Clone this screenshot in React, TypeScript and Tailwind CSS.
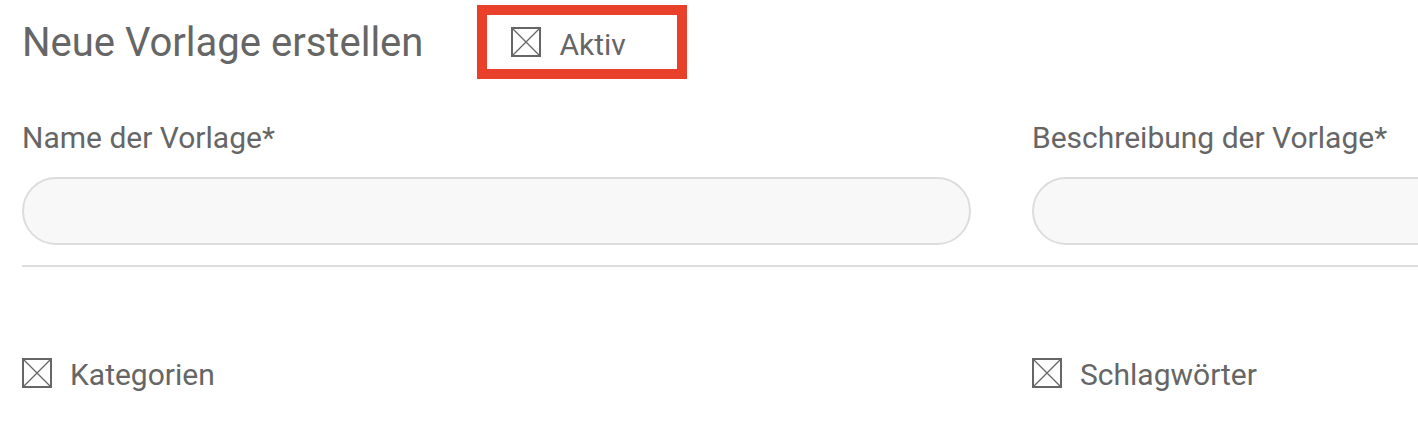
import React from "react";

function CrossBox() {
  return (
    <svg width="30" height="30" viewBox="0 0 30 30" className="shrink-0">
      <rect x="1" y="1" width="28" height="28" fill="none" stroke="#666" strokeWidth="2" />
      <path d="M2 2 L28 28 M28 2 L2 28" stroke="#666" strokeWidth="1.3" />
    </svg>
  );
}

const fields = [
  { label: "Name der Vorlage*" },
  { label: "Beschreibung der Vorlage*" },
];

export default function App() {
  return (
    <div
      className="w-[1418px] h-[436px] overflow-hidden bg-white text-[#666]"
      style={{ fontFamily: "Roboto, 'Liberation Sans', sans-serif" }}
    >
      <div className="w-[2000px] pl-[22px]">
        {/* Kopfzeile */}
        <div className="flex items-center h-[85px]">
          <h1 className="text-[40px] leading-none font-normal">Neue Vorlage erstellen</h1>
          <div className="ml-[54px] mt-[-2px] w-[210px] h-[74px] border-[10px] border-[#e8402a] flex items-center pl-[24px]">
            <CrossBox />
            <span className="ml-[18px] mt-[6px] text-[30px] leading-none">Aktiv</span>
          </div>
        </div>

        {/* Felder */}
        <div className="flex gap-[61px] mt-[38px]">
          {fields.map((f) => (
            <div key={f.label} className="w-[949px]">
              <label className="block text-[30px] leading-none">{f.label}</label>
              <div className="mt-[24px] h-[68px] rounded-full border-2 border-[#dddddd] bg-[#f8f8f8]" />
            </div>
          ))}
        </div>

        <div className="mt-[20px] h-[2px] bg-[#dddddd]" />

        {/* Optionen */}
        <div className="flex gap-[61px] mt-[88px]">
          {["Kategorien", "Schlagwörter"].map((t) => (
            <div key={t} className="w-[949px] flex items-center">
              <CrossBox />
              <span className="ml-[18px] mt-[5px] text-[30px] leading-none">{t}</span>
            </div>
          ))}
        </div>
      </div>
    </div>
  );
}
